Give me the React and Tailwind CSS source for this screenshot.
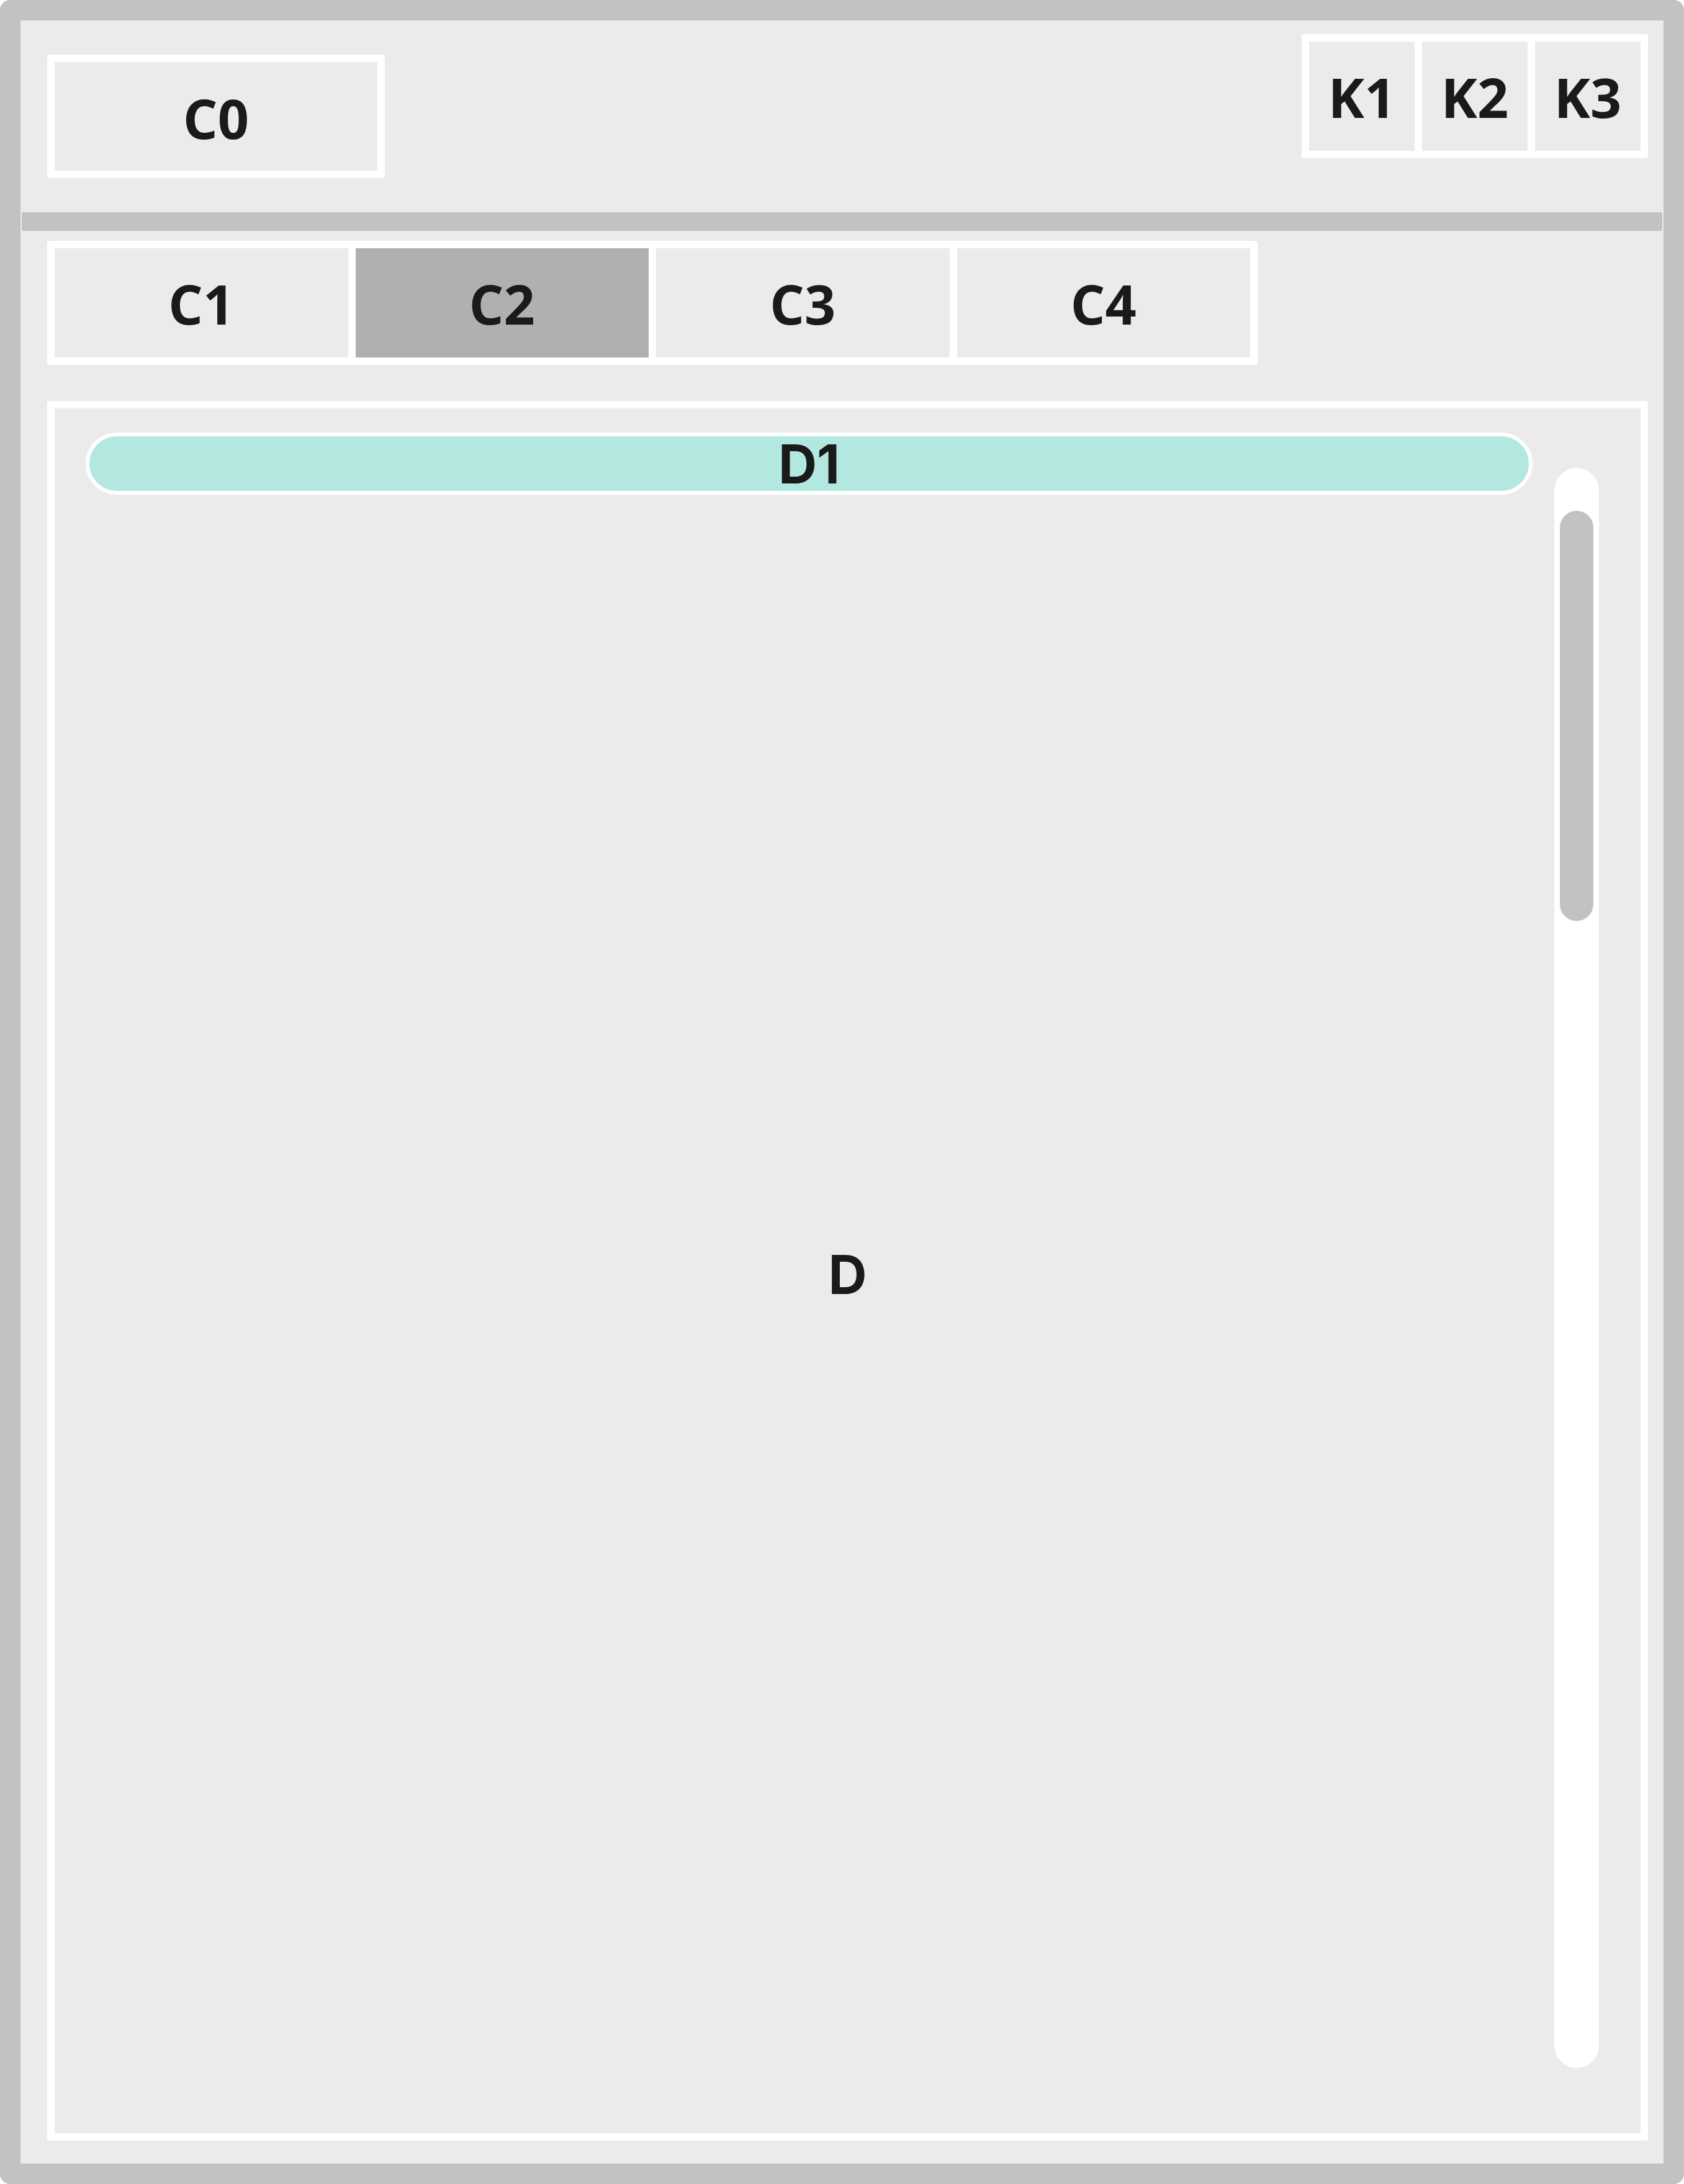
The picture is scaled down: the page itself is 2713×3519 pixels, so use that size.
import React from 'react';

const sans = "font-['Open_Sans',sans-serif]";
const geo = "font-['Inter',sans-serif]";

const tabs = ['C1', 'C2', 'C3', 'C4'];
const keys = ['K1', 'K2', 'K3'];

const Label = ({ children, className = '' }) => (
  <span className={`${sans} font-bold text-[88px] leading-none text-[#1a1a1a] ${className}`}>{children}</span>
);

const App = () => {
  const activeTab = 'C2';

  return (
    <div className="w-[2713px] h-[3519px] bg-white">
      <div className="w-full h-full flex flex-col rounded-[16px] border-[33px] border-[#c2c2c2] bg-[#ebebeb]">
        {/* header */}
        <header className="h-[309px] flex justify-between items-start pl-[43px] pr-[25px]">
          <div className="mt-[55px] w-[544px] h-[199px] border-[12px] border-white rounded-[4px] flex items-center justify-center">
            <Label className="mt-[4px]">C0</Label>
          </div>
          {/* divide-x puts the 12px rule inside each cell but the last one */}
          <div className="mt-[22px] h-[200px] flex border-[12px] border-white rounded-[4px] divide-x-[12px] divide-white">
            {keys.map((k) => (
              <div key={k} className="w-[182px] last:w-[170px] h-full flex items-center justify-center">
                <Label className="mt-[2px]">{k}</Label>
              </div>
            ))}
          </div>
        </header>

        <div className="h-[30px] mx-[2px] bg-[#c2c2c2] rounded-[2px]" />

        {/* tabs */}
        <nav className="mt-[16px] ml-[43px] w-[1950px] h-[200px] flex border-[12px] border-white rounded-[4px] divide-x-[12px] divide-white">
          {tabs.map((t) => (
            <div
              key={t}
              className={`w-[485px] last:w-[473px] h-full flex items-center justify-center ${t === activeTab ? 'bg-[#b0b0b0]' : ''}`}
            >
              <Label className="mt-[2px]">{t}</Label>
            </div>
          ))}
        </nav>

        {/* content panel */}
        <main className="mt-[58px] ml-[43px] mr-[25px] mb-[37px] flex-1 grid border-[12px] border-white rounded-[4px]">
          <div className="col-start-1 row-start-1 self-start mt-[39px] ml-[50px] mr-[174px] h-[100px] rounded-full border-[6px] border-white bg-[#b3e8e0] flex items-center justify-center">
            <span className={`${geo} font-bold text-[86px] leading-none text-[#1a1a1a] mt-[2px]`}>D1</span>
          </div>
          <div className="col-start-1 row-start-1 place-self-center mt-[12px]">
            <span className={`${geo} font-bold text-[86px] leading-none text-[#1a1a1a]`}>D</span>
          </div>
          <div className="col-start-1 row-start-1 justify-self-end self-stretch mt-[96px] mb-[105px] mr-[67px] w-[72px] rounded-full bg-white pt-[69px] px-[9px]">
            <div className="h-[661px] rounded-full bg-[#c2c2c2]" />
          </div>
        </main>
      </div>
    </div>
  );
};

export default App;
